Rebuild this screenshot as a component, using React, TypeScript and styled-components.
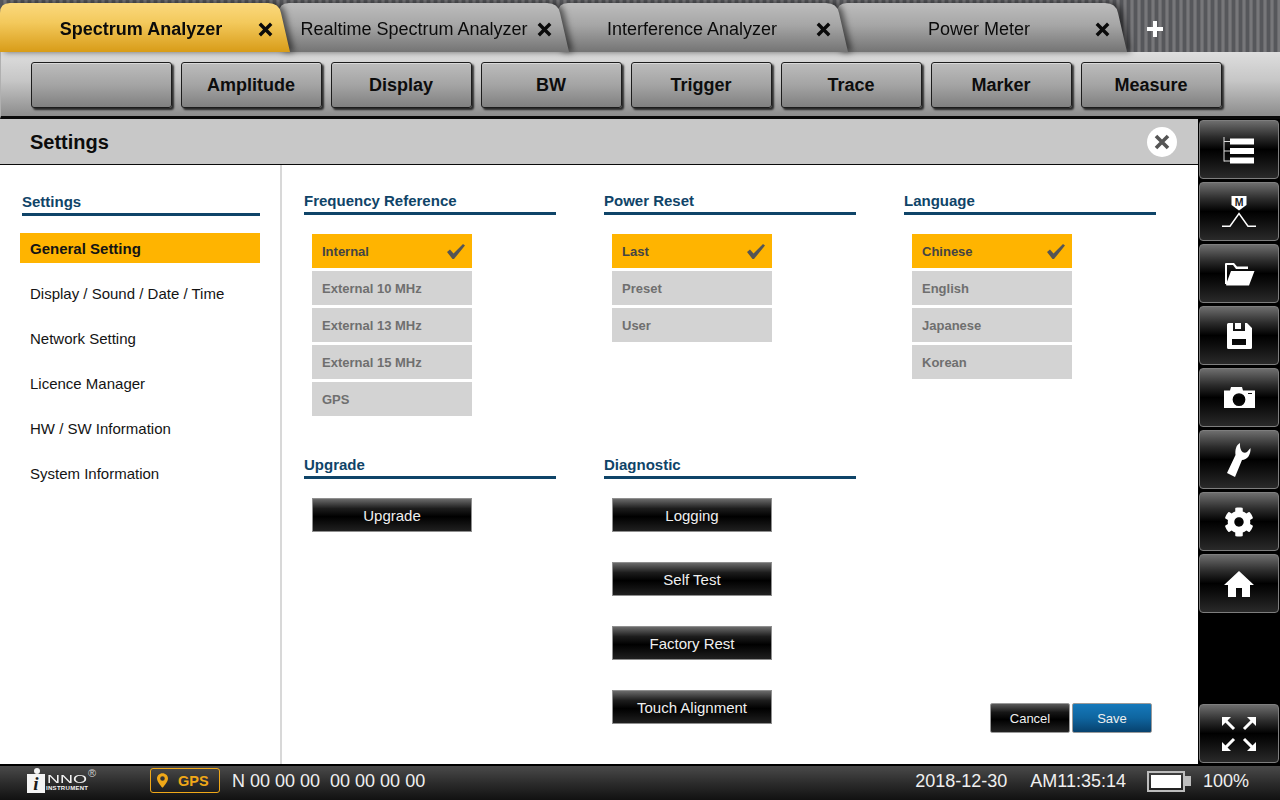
import React from "react";
import styled, { createGlobalStyle } from "styled-components";
import { FaCog } from "react-icons/fa";

const Global = createGlobalStyle`
  html, body { margin: 0; padding: 0; width: 1280px; height: 800px; overflow: hidden; background: #fff; }
  body { font-family: "Liberation Sans", Arial, sans-serif; }
  * { box-sizing: border-box; }
`;

const Page = styled.div`
  width: 1280px;
  height: 800px;
  display: flex;
  flex-direction: column;
`;

const TabBar = styled.div`
  height: 52px;
  display: flex;
  align-items: stretch;
  padding-top: 3px;
  background: repeating-linear-gradient(90deg, #56575b 0 3px, #6a6a6d 3px 4px, #77777a 4px 6px, #6a6a6d 6px 7px);
`;

const Tab = styled.div<{ $active?: boolean; $z: number; $padLeft: number }>`
  position: relative;
  z-index: ${(p) => p.$z};
  width: 291px;
  flex: none;
  margin-right: -12px;
  display: flex;
  align-items: center;
  padding: 4px 18px 0 ${(p) => p.$padLeft}px;
  filter: drop-shadow(4px 0 3px rgba(0, 0, 0, 0.55));
  &::before {
    content: "";
    position: absolute;
    inset: 0;
    clip-path: path("M0 49 L0 10 Q0 0 10 0 L268 0 Q279 0 281 10 L290 49 Z");
    background: ${(p) =>
      p.$active
        ? "linear-gradient(#fbd97e 0%, #f3c95c 40%, #d89c18 100%)"
        : "linear-gradient(#bdbdbd 0%, #a6a6a6 45%, #747474 100%)"};
  }
`;

const TabLabel = styled.span<{ $active?: boolean }>`
  position: relative;
  flex: 1;
  text-align: center;
  font-size: 18px;
  white-space: nowrap;
  color: #0b0b0b;
  font-weight: ${(p) => (p.$active ? 700 : 400)};
`;

const TabClose = styled.svg`
  position: relative;
  width: 15px;
  height: 15px;
  flex: none;
  margin-left: 4px;
`;

const AddTab = styled.div`
  position: relative;
  z-index: 0;
  margin: 2px 0 0 31px;
  display: flex;
  align-items: center;
  color: #fff;
`;

const Toolbar = styled.div`
  height: 67px;
  display: flex;
  gap: 9px;
  padding: 10px 0 0 30px;
  background: linear-gradient(#dedede 0%, #c6c6c6 45%, #8c8c8c 100%);
  border-bottom: 3px solid #0a0a0a;
  border-left: 1px solid #b0b0b0;
`;

const ToolButton = styled.button`
  width: 141px;
  height: 46px;
  padding: 0 1px 0 0;
  border: 1px solid #1c1c1c;
  border-radius: 3px;
  font: 700 18px "Liberation Sans", Arial, sans-serif;
  color: #0d0d0d;
  background: linear-gradient(#bcbcbc 0%, #a4a4a4 50%, #808080 100%);
  box-shadow: inset 0 1px 0 #d8d8d8, 2px 2px 2px rgba(0, 0, 0, 0.75);
`;

const Body = styled.div`
  flex: 1;
  min-height: 0;
  display: flex;
`;

const Panel = styled.div`
  flex: 1;
  min-width: 0;
  display: flex;
  flex-direction: column;
  background: #fff;
`;

const PanelHeader = styled.div`
  height: 46px;
  flex: none;
  display: flex;
  align-items: center;
  justify-content: space-between;
  padding: 0 21px 0 30px;
  background: #c8c8c8;
  border-bottom: 1px solid #0a0a0a;
`;

const PanelTitle = styled.h1`
  margin: 2px 0 0;
  font-size: 20px;
  font-weight: 700;
  color: #0c0c0c;
`;

const CloseCircle = styled.button`
  width: 30px;
  height: 30px;
  padding: 0;
  border: none;
  border-radius: 50%;
  background: #fff;
  display: flex;
  align-items: center;
  justify-content: center;
`;

const PanelBody = styled.div`
  flex: 1;
  min-height: 0;
  display: flex;
`;

const Sidebar = styled.nav`
  width: 282px;
  flex: none;
  padding: 28px 20px 0 20px;
  border-right: 2px solid #d8d8d8;
`;

const SideTitle = styled.div`
  margin-left: 2px;
  padding-bottom: 3px;
  font-size: 15px;
  font-weight: 700;
  line-height: 17px;
  color: #0f4468;
  border-bottom: 3px solid #0f4468;
`;

const SideList = styled.div`
  margin-top: 17px;
  display: flex;
  flex-direction: column;
  gap: 15px;
`;

const SideItem = styled.div<{ $active?: boolean }>`
  height: 30px;
  padding-left: 10px;
  display: flex;
  align-items: center;
  font-size: 15px;
  font-weight: ${(p) => (p.$active ? 700 : 400)};
  color: #141414;
  background: ${(p) => (p.$active ? "#ffb400" : "transparent")};
`;

const Content = styled.div`
  flex: 1;
  padding: 27px 0 31px 22px;
  display: grid;
  grid-template-columns: 252px 252px 252px;
  grid-template-rows: 264px 1fr;
  column-gap: 48px;
`;

const Section = styled.section``;

const SectionTitle = styled.div`
  padding-bottom: 3px;
  font-size: 15px;
  font-weight: 700;
  line-height: 17px;
  color: #0f4468;
  border-bottom: 3px solid #0f4468;
`;

const OptionList = styled.div`
  margin: 19px 0 0 8px;
  display: flex;
  flex-direction: column;
  gap: 3px;
`;

const Option = styled.div<{ $active?: boolean }>`
  width: 160px;
  height: 34px;
  padding: 0 6px 0 10px;
  display: flex;
  align-items: center;
  justify-content: space-between;
  font-size: 13px;
  font-weight: 700;
  color: ${(p) => (p.$active ? "#444444" : "#6f6f6f")};
  background: ${(p) => (p.$active ? "#ffb400" : "#d3d3d3")};
`;

const ActionList = styled.div`
  margin: 19px 0 0 8px;
  display: flex;
  flex-direction: column;
  gap: 30px;
`;

const ActionButton = styled.button`
  width: 160px;
  height: 34px;
  padding: 0;
  border: 1px solid #8f8f8f;
  font: 400 15px "Liberation Sans", Arial, sans-serif;
  color: #efefef;
  background: linear-gradient(#6a6a6a 0%, #1c1c1c 30%, #000 55%, #202020 100%);
`;

const FormActions = styled.div`
  align-self: end;
  display: flex;
  justify-content: flex-end;
  gap: 2px;
  padding-right: 4px;
`;

const FormButton = styled.button<{ $primary?: boolean }>`
  width: 80px;
  height: 30px;
  padding: 0;
  border: 1px solid #9a9a9a;
  border-radius: 2px;
  font: 400 13px "Liberation Sans", Arial, sans-serif;
  color: #efefef;
  background: ${(p) =>
    p.$primary
      ? "linear-gradient(#1579bb 0%, #0f659f 50%, #07426e 100%)"
      : "linear-gradient(#5a5a5a 0%, #161616 30%, #000 55%, #222 100%)"};
`;

const Rail = styled.aside`
  width: 82px;
  flex: none;
  padding: 1px 0 1px 1px;
  background: #000;
  display: flex;
  flex-direction: column;
  gap: 3px;
`;

const RailButton = styled.button<{ $end?: boolean }>`
  width: 80px;
  height: 59px;
  flex: none;
  padding: 0;
  margin-top: ${(p) => (p.$end ? "auto" : "0")};
  border: 1px solid #7e7e7e;
  border-radius: 4px;
  display: flex;
  align-items: center;
  justify-content: center;
  color: #fff;
  background: linear-gradient(#6e6e6e 0%, #2c2c2c 28%, #000 50%, #101010 70%, #2a2a2a 100%);
`;

const StatusBar = styled.footer`
  height: 36px;
  flex: none;
  display: flex;
  align-items: center;
  padding: 0 31px 4px 27px;
  color: #efefef;
  font-size: 18px;
  white-space: nowrap;
  border-top: 2px solid #000;
  background: linear-gradient(#4a4a4a 0%, #2c2c2c 50%, #111 100%);
`;

const Logo = styled.div`
  position: relative;
  width: 72px;
  height: 26px;
  flex: none;
  color: #f4f4f4;
`;

const LogoMark = styled.div`
  position: absolute;
  left: 0;
  top: 6px;
  width: 18px;
  height: 19px;
  background: #f4f4f4;
  display: flex;
  align-items: center;
  justify-content: center;
  overflow: hidden;
  color: #1a1a1a;
  font: italic 700 19px/19px "Liberation Serif", serif;
`;

const LogoHead = styled.div`
  position: absolute;
  left: 7px;
  top: 0;
  width: 6px;
  height: 6px;
  border-radius: 50%;
  background: #f4f4f4;
`;

const LogoNno = styled.span`
  position: absolute;
  left: 20px;
  top: 7px;
  font: 400 10px/10px "Liberation Sans", sans-serif;
  transform: scaleX(1.8);
  transform-origin: left center;
`;

const LogoSub = styled.span`
  position: absolute;
  left: 19px;
  top: 17px;
  font: 700 6px/7px "Liberation Sans", sans-serif;
  letter-spacing: 0.3px;
`;

const LogoReg = styled.span`
  position: absolute;
  left: 61px;
  top: 0;
  font: 400 11px/11px "Liberation Sans", sans-serif;
  color: #cfcfcf;
`;

const GpsBadge = styled.div`
  margin: -1px 0 0 51px;
  width: 70px;
  height: 25px;
  flex: none;
  display: flex;
  align-items: center;
  gap: 10px;
  padding-left: 6px;
  border: 1px solid #f0a818;
  border-radius: 3px;
  color: #f0a818;
  font-size: 14.5px;
  font-weight: 700;
`;

const Coords = styled.span`
  margin-left: 12px;
  white-space: pre;
`;

const Spacer = styled.div`
  flex: 1;
`;

const Clock = styled.span`
  margin-left: 23px;
`;

const Battery = styled.div`
  margin-left: 21px;
  width: 38px;
  height: 21px;
  flex: none;
  border: 2px solid #bdbdbd;
  padding: 2px;
  position: relative;
  &::after {
    content: "";
    position: absolute;
    left: 36px;
    top: 3px;
    width: 6px;
    height: 10px;
    background: #bdbdbd;
  }
`;

const BatteryFill = styled.div`
  height: 100%;
  background: #fff;
`;

const BatteryText = styled.span`
  margin-left: 18px;
`;

const CloseIcon = () => (
  <TabClose viewBox="0 0 15 15">
    <path d="M1.8 1.8 L13.2 13.2 M13.2 1.8 L1.8 13.2" stroke="#0a0a0a" strokeWidth="3.4" />
  </TabClose>
);

const Check = () => (
  <svg width="20" height="17" viewBox="0 0 20 17">
    <path d="M1 9 L4 6.5 L7.5 10.5 L17 1 L19 2.5 L8 16 L6.5 16 Z" fill="#555" />
  </svg>
);

const TreeIcon = () => (
  <svg width="32" height="28" viewBox="0 0 32 28" fill="none">
    <path d="M1 1 V25.5 M1 5.5 H8 M1 15 H8 M1 25 H8" stroke="#dcdcdc" strokeWidth="1" />
    <path d="M7 2.5 H31 V8.5 H7 Z M7 12 H31 V18 H7 Z M7 21.5 H31 V27.5 H7 Z" fill="#fff" />
  </svg>
);

const MarkerIcon = () => (
  <svg width="34" height="31" viewBox="0 0 34 31" fill="none">
    <path d="M9.5 0 H24.5 V9 L17 14.5 L9.5 9 Z" fill="#fff" />
    <text x="17" y="10" textAnchor="middle" fontFamily="Liberation Sans" fontWeight="700" fontSize="10.5" fill="#222">M</text>
    <path d="M0 30.2 H8 L17 17.5 L26 30.2 H34" stroke="#fff" strokeWidth="1.5" />
  </svg>
);

const FolderIcon = () => (
  <svg width="31" height="24" viewBox="0 0 31 24">
    <path d="M1 22 V2 Q1 1 2 1 H10 L13 4.5 H24 V7 H12 L9 3 H3 V22 Z" fill="#fff" />
    <path d="M7 9 H30.5 L25 23.5 H2.5 Q1.5 23.5 2.5 21 Z" fill="#fff" />
  </svg>
);

const SaveIcon = () => (
  <svg width="25" height="26" viewBox="0 0 25 26">
    <path
      fillRule="evenodd"
      d="M1.5 0 H20 L25 5 V24.5 Q25 26 23.5 26 H1.5 Q0 26 0 24.5 V1.5 Q0 0 1.5 0 Z M6 0 V8 H18 V0 Z M5 16 V22 H19 V16 Z"
      fill="#fff"
    />
    <path d="M8 0 H14 V6 H8 Z" fill="#fff" />
  </svg>
);

const CameraIcon = () => (
  <svg width="31" height="21" viewBox="0 0 31 21">
    <path
      fillRule="evenodd"
      d="M0 3.5 H6 L7 0 H18 L19 3.5 H31 V21 H0 Z M15 6.2 A6.4 6.4 0 1 0 15 19 A6.4 6.4 0 1 0 15 6.2 Z M24 6 V7 H28 V6 Z"
      fill="#fff"
    />
  </svg>
);

const WrenchIcon = () => (
  <svg width="24" height="34" viewBox="0 0 24 34">
    <path d="M13 0 C9 2 8 7 8.5 12 L0 30 L8 34 L15 17 C20 17 24 12 23.5 5 L20 9 C17 11 12.5 9 13 0 Z" fill="#fff" />
  </svg>
);

const HomeIcon = () => (
  <svg width="30" height="26" viewBox="0 0 30 26">
    <path d="M15 0 L30 14 H26 V26 H18 V17 H12 V26 H4 V14 H0 Z" fill="#fff" />
  </svg>
);

const ExpandIcon = () => (
  <svg width="34" height="34" viewBox="0 0 34 34" fill="none">
    <g fill="#fff">
      <path d="M0 0 H9 L0 9 Z" />
      <path d="M34 0 H25 L34 9 Z" />
      <path d="M0 34 H9 L0 25 Z" />
      <path d="M34 34 H25 L34 25 Z" />
    </g>
    <path d="M3 3 L12 12 M31 3 L22 12 M3 31 L12 22 M31 31 L22 22" stroke="#fff" strokeWidth="3" />
  </svg>
);

const PinIcon = () => (
  <svg width="11" height="15" viewBox="0 0 12 16">
    <path
      fillRule="evenodd"
      d="M6 0 C2.7 0 0 2.6 0 5.8 C0 9.8 6 16 6 16 C6 16 12 9.8 12 5.8 C12 2.6 9.3 0 6 0 Z M6 3.4 A2.5 2.5 0 1 1 6 8.4 A2.5 2.5 0 1 1 6 3.4 Z"
      fill="#f0a818"
    />
  </svg>
);

const tabs = [
  { label: "Spectrum Analyzer", active: true, padLeft: 28 },
  { label: "Realtime Spectrum Analyzer", padLeft: 16 },
  { label: "Interference Analyzer", padLeft: 14 },
  { label: "Power Meter", padLeft: 30 },
];

const tools = ["", "Amplitude", "Display", "BW", "Trigger", "Trace", "Marker", "Measure"];
const sideItems = ["General Setting", "Display / Sound / Date / Time", "Network Setting", "Licence Manager", "HW / SW Information", "System Information"];

const optionSections = [
  { title: "Frequency Reference", options: ["Internal", "External 10 MHz", "External 13 MHz", "External 15 MHz", "GPS"] },
  { title: "Power Reset", options: ["Last", "Preset", "User"] },
  { title: "Language", options: ["Chinese", "English", "Japanese", "Korean"] },
];

const actionSections = [
  { title: "Upgrade", actions: ["Upgrade"] },
  { title: "Diagnostic", actions: ["Logging", "Self Test", "Factory Rest", "Touch Alignment"] },
];

export default function App() {
  return (
    <Page>
      <Global />
      <TabBar>
        {tabs.map((t, i) => (
          <Tab key={t.label} $active={t.active} $z={10 - i} $padLeft={t.padLeft}>
            <TabLabel $active={t.active}>{t.label}</TabLabel>
            <CloseIcon />
          </Tab>
        ))}
        <AddTab>
          <svg width="16" height="16" viewBox="0 0 16 16">
            <path d="M6 0 H10 V6 H16 V10 H10 V16 H6 V10 H0 V6 H6 Z" fill="#fff" />
          </svg>
        </AddTab>
      </TabBar>
      <Toolbar>
        {tools.map((t, i) => (
          <ToolButton key={i}>{t}</ToolButton>
        ))}
      </Toolbar>
      <Body>
        <Panel>
          <PanelHeader>
            <PanelTitle>Settings</PanelTitle>
            <CloseCircle>
              <svg width="16" height="16" viewBox="0 0 16 16">
                <path d="M2 2 L14 14 M14 2 L2 14" stroke="#555" strokeWidth="3.6" />
              </svg>
            </CloseCircle>
          </PanelHeader>
          <PanelBody>
            <Sidebar>
              <SideTitle>Settings</SideTitle>
              <SideList>
                {sideItems.map((s, i) => (
                  <SideItem key={s} $active={i === 0}>{s}</SideItem>
                ))}
              </SideList>
            </Sidebar>
            <Content>
              {optionSections.map((sec) => (
                <Section key={sec.title}>
                  <SectionTitle>{sec.title}</SectionTitle>
                  <OptionList>
                    {sec.options.map((o, i) => (
                      <Option key={o} $active={i === 0}>
                        {o}
                        {i === 0 && <Check />}
                      </Option>
                    ))}
                  </OptionList>
                </Section>
              ))}
              {actionSections.map((sec) => (
                <Section key={sec.title}>
                  <SectionTitle>{sec.title}</SectionTitle>
                  <ActionList>
                    {sec.actions.map((a, i) => (
                      <ActionButton key={i}>{a}</ActionButton>
                    ))}
                  </ActionList>
                </Section>
              ))}
              <FormActions>
                <FormButton>Cancel</FormButton>
                <FormButton $primary>Save</FormButton>
              </FormActions>
            </Content>
          </PanelBody>
        </Panel>
        <Rail>
          <RailButton><TreeIcon /></RailButton>
          <RailButton><MarkerIcon /></RailButton>
          <RailButton><FolderIcon /></RailButton>
          <RailButton><SaveIcon /></RailButton>
          <RailButton><CameraIcon /></RailButton>
          <RailButton><WrenchIcon /></RailButton>
          <RailButton><FaCog size={30} /></RailButton>
          <RailButton><HomeIcon /></RailButton>
          <RailButton $end><ExpandIcon /></RailButton>
        </Rail>
      </Body>
      <StatusBar>
        <Logo>
          <LogoHead />
          <LogoMark>i</LogoMark>
          <LogoNno>NNO</LogoNno>
          <LogoSub>INSTRUMENT</LogoSub>
          <LogoReg>®</LogoReg>
        </Logo>
        <GpsBadge><PinIcon />GPS</GpsBadge>
        <Coords>N 00 00 00  00 00 00 00</Coords>
        <Spacer />
        <span>2018-12-30</span>
        <Clock>AM11:35:14</Clock>
        <Battery><BatteryFill /></Battery>
        <BatteryText>100%</BatteryText>
      </StatusBar>
    </Page>
  );
}
